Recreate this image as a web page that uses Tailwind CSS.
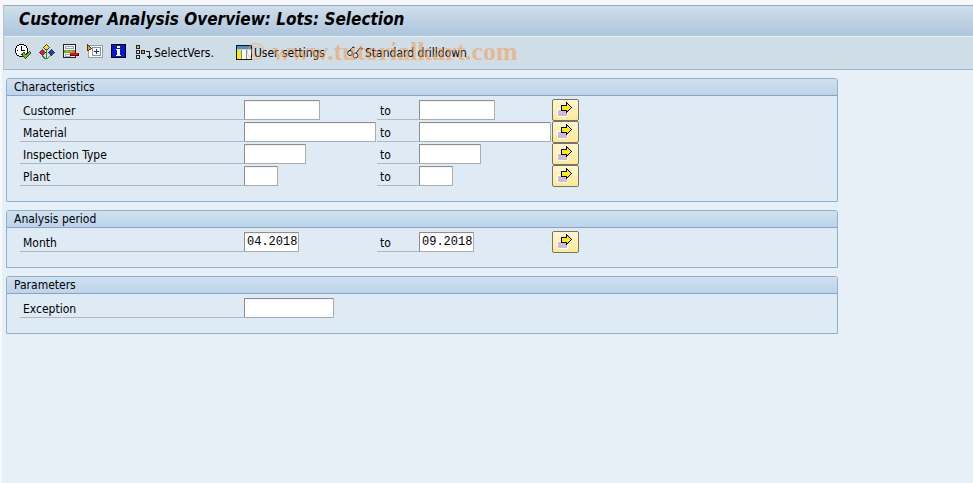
<!DOCTYPE html>
<html lang="en">
<head>
    <meta charset="UTF-8">
    <meta name="viewport" content="width=device-width, initial-scale=1.0">
    <title>Customer Analysis Overview: Lots: Selection</title>
    <script src="https://cdn.jsdelivr.net/npm/@tailwindcss/browser@4"></script>
</head>
<body class="min-h-screen flex flex-col bg-[#f6f8fb] pt-[5px] pl-[2px] font-['DejaVu_Sans_Condensed','DejaVu_Sans',sans-serif] text-[12px] leading-4 text-black">

    <!-- Shared icon of the multiple selection buttons -->
    <svg class="hidden">
        <symbol id="arrow" viewBox="0 0 16 16">
            <path d="M0 7h11v8H0z" fill="#fff"/>
            <path d="M1 8h9v6H1z" fill="#d0badc"/>
            <path d="M9 0h1v1h1v1h1v1h1v1h1v1h1v1h-1v1h-1v1h-1v1h-1v1h-1v1H9V9H4V3h5z" fill="#000"/>
            <path d="M5 4h5V2h1v1h1v1h1v1h1v1h-1v1h-1v1h-1v1h-1V8H5z" fill="#ffe900"/>
        </symbol>
    </svg>

    <!-- Title bar -->
    <header class="ml-px h-8 flex items-center pl-[15px] border-t border-l border-t-[#9aabc0] border-l-[#b4c4d4] border-b border-b-[#e6eef5] bg-linear-to-b from-[#cfdeeb] to-[#adc5dc]">
        <h1 class="text-[17px] leading-5 pb-1 font-bold italic">Customer Analysis Overview: Lots: Selection</h1>
    </header>

    <!-- Toolbar -->
    <nav class="relative ml-px h-[33px] flex items-center pl-[11px] border-l border-b border-l-[#b4c4d4] border-b-[#a4b6c8] bg-[#cfdde7]" aria-label="Toolbar">
        <div class="flex gap-2 pb-0.5">
            <button type="button" aria-label="Execute">
                <svg class="size-4" viewBox="0 0 16 16" shape-rendering="crispEdges">
                    <path d="M4 0h5v1h2v1h1v2h1v5h-1v2h-1v1H9v1H4v-1H2v-1H1V9H0V4h1V2h1V1h2z" fill="#000"/>
                    <path d="M4 1h5v1h2v2h1v5h-1v2H9v1H4v-1H2V9H1V4h1V2h2z" fill="#fff"/>
                    <path d="M6 2h1v4h3v1H6zM2 6h1v1H2zM6 10h1v1H6z" fill="#000"/>
                    <path d="M8 8h2v2h2V9h1V8h1V7h1v1h1v2h-1v1h-1v1h-1v1h-1v1h-1v1h-1v-1H9v-1H8v-1H7V9h1z" fill="#26500e"/>
                    <path d="M8 9h1v1h1v1h2v-1h1V9h1V8h1v2h-1v1h-1v1h-1v1h-1v1h-1v-1H9v-1H8z" fill="#78b63f"/>
                </svg>
            </button>
            <button type="button" aria-label="Variants">
                <svg class="size-4" viewBox="0 0 16 16" shape-rendering="crispEdges">
                    <path d="M7 6h1v9H7zM3 10h1v2h1v1h1v1h3v-1h1v-1h1v-2h1v2h-1v1h-1v1H9v1H5v-1H4v-1H3z" fill="#248a35"/>
                    <path d="M7 0h1v1h1v1h1v1h1v1h-1v1H9v1H6V5H5V4H4V3h1V2h1V1h1z" fill="#444"/>
                    <path d="M7 1h1v1h1v1h1v1H9v1H6V4H5V3h1V2h1z" fill="#ffe600"/>
                    <path d="M3 5h1v1h1v1h1v1h1v1H6v1H5v1H4v1H3v-1H2v-1H1V9H0V8h1V7h1V6h1z" fill="#444"/>
                    <path d="M3 6h1v1h1v1h1v1H5v1H4v1H3v-1H2V9H1V8h1V7h1z" fill="#f01818"/>
                    <path d="M12 5h1v1h1v1h1v1h1v1h-1v1h-1v1h-1v1h-1v-1h-1v-1h-1V9H9V8h1V7h1V6h1z" fill="#333"/>
                    <path d="M12 6h1v1h1v1h1v1h-1v1h-1v1h-1v-1h-1V9h-1V8h1V7h1z" fill="#1c37e8"/>
                </svg>
            </button>
            <button type="button" aria-label="Delete selection row">
                <svg class="size-4" viewBox="0 0 16 16" shape-rendering="crispEdges">
                    <path d="M0 0h13v14H0z" fill="#222"/>
                    <path d="M1 1h11v12H1z" fill="#f3f5fa"/>
                    <path d="M2 2h9v3H2zM2 10h6v3H2z" fill="#98a3bd"/>
                    <path d="M3 3h7v1H3zM3 11h4v1H3z" fill="#fff"/>
                    <path d="M1 6h11v3H1z" fill="#7d9d24"/>
                    <path d="M3 7h2v1H3zM7 7h2v1H7z" fill="#b8c96b"/>
                    <path d="M7 9h9v3H7z" fill="#5c0000"/>
                    <path d="M7 9h8v2H7z" fill="#f00"/>
                </svg>
            </button>
            <button type="button" aria-label="Dynamic selections">
                <svg class="size-4" viewBox="0 0 16 16" shape-rendering="crispEdges">
                    <path d="M1 1h15v13H1z" fill="#9c9c9c"/>
                    <path d="M2 2h13v11H2z" fill="#fff"/>
                    <path d="M5 3h9v9H5z" fill="#7c92c4"/>
                    <path d="M6 4h7v7H6z" fill="#fff"/>
                    <path d="M9 5h1v2h2v1h-2v2H9V8H7V7h2z" fill="#16309c"/>
                    <path d="M0 0h1v1h1v1h1v1h1v1h1v1H4v1H2v1H0z" fill="#58330b"/>
                    <path d="M1 2h1v1h1v1h1v1H2v1H1z" fill="#ef9c1b"/>
                </svg>
            </button>
            <button type="button" aria-label="Information">
                <svg class="size-4" viewBox="0 0 16 16" shape-rendering="crispEdges">
                    <path d="M0 0h15v14H0z" fill="#000"/>
                    <path d="M1 1h13v12H1z" fill="#0018d8"/>
                    <path d="M6 2h3v2H6zM5 5h4v6h1v1H5v-1h1V6H5z" fill="#fff"/>
                </svg>
            </button>
        </div>

        <button type="button" class="ml-[9px] flex items-center gap-0.5 whitespace-nowrap">
            <svg class="size-4" viewBox="0 0 16 16" shape-rendering="crispEdges">
                <path d="M0 0h4v4H0zM0 5h4v4H0zM0 10h4v4H0zM5 5h4v4H5z" fill="#222"/>
                <path d="M1 1h2v2H1z" fill="#b3d465"/>
                <path d="M1 6h2v2H1zM1 11h2v2H1z" fill="#d9e2e6"/>
                <path d="M6 6h2v2H6z" fill="#f2a01e"/>
                <path d="M10 6h4v5h2v1h-1v1h-1v1h-1v-1h-1v-1h-1v-1h2V7h-3z" fill="#222"/>
            </svg>
            SelectVers.
        </button>
        <button type="button" class="ml-[22px] flex items-center gap-0.5 whitespace-nowrap">
            <svg class="size-4" viewBox="0 0 16 16" shape-rendering="crispEdges">
                <path d="M0 0h16v15H0z" fill="#111"/>
                <path d="M1 1h14v3H1z" fill="#3f8fc8"/>
                <path d="M1 5h4v9H1z" fill="#ffe800"/>
                <path d="M6 5h4v9H6zM11 5h4v9h-4z" fill="#f4fafc"/>
                <path d="M5 2h1v12H5zM10 2h1v12h-1z" fill="#7a8d99"/>
                <path d="M1 4h14v1H1z" fill="#b9d9ee"/>
            </svg>
            User settings
        </button>
        <button type="button" class="ml-[22px] flex items-center gap-0.5 whitespace-nowrap">
            <svg class="size-4" viewBox="0 0 16 16" fill="none" stroke="#222">
                <path d="M1 7L6 2h1v1M9 8l4-5h2v2"/>
                <circle cx="3" cy="8" r="2.500"/>
                <circle cx="8.500" cy="10.500" r="2.500"/>
            </svg>
            Standard drilldown
        </button>

        <span class="absolute left-[242px] top-0 font-['Liberation_Serif',serif] text-[26px] leading-[30px] font-bold whitespace-nowrap text-[#f79a45]/55 pointer-events-none"><span class="font-normal">©</span> www.tutorialkart.com</span>
    </nav>

    <!-- Selection screen -->
    <main class="grow bg-[#e8f0f7] pt-2 pl-1">
        <form class="max-w-[832px] flex flex-col gap-2">
            <section class="h-[124px] border border-[#8fafcd] rounded-t-[3px] bg-[#deebf4]" aria-labelledby="characteristics">
                <h2 id="characteristics" class="h-[17px] pl-[7px] border-b border-[#8aa5c4] rounded-t-[2px] bg-linear-to-b from-[#d0e0f0] to-[#bcd4ea]">Characteristics</h2>
                <div class="pt-[3px] pl-[13px]">
                    <div class="h-[22px] grid grid-cols-[224px_133px_42px_133px_27px] items-center">
                        <label for="customer" class="h-5 pt-[3px] pl-[3px] border-b border-[#b0b8bf]">Customer</label>
                        <input id="customer" type="text" class="w-[76px] h-5 rounded-[1px] border border-t-[#8e8e92] border-l-[#8e8e92] border-r-[#a9adb1] border-b-[#a9adb1] bg-white pl-0.5 inset-shadow-xs">
                        <label for="customer-to" class="h-5 pt-[3px] pl-[3px] border-b border-[#b0b8bf]">to</label>
                        <input id="customer-to" type="text" class="w-[76px] h-5 rounded-[1px] border border-t-[#8e8e92] border-l-[#8e8e92] border-r-[#a9adb1] border-b-[#a9adb1] bg-white pl-0.5 inset-shadow-xs">
                        <button type="button" aria-label="Multiple selection for customer" class="h-[22px] pl-1 rounded-[2px] border border-[#77736a] bg-linear-to-b from-[#fff7d0] to-[#ffe98f]">
                            <svg class="size-4" shape-rendering="crispEdges"><use href="#arrow"/></svg>
                        </button>
                    </div>
                    <div class="h-[22px] grid grid-cols-[224px_133px_42px_133px_27px] items-center">
                        <label for="material" class="h-5 pt-[3px] pl-[3px] border-b border-[#b0b8bf]">Material</label>
                        <input id="material" type="text" class="w-[132px] h-5 rounded-[1px] border border-t-[#8e8e92] border-l-[#8e8e92] border-r-[#a9adb1] border-b-[#a9adb1] bg-white pl-0.5 inset-shadow-xs">
                        <label for="material-to" class="h-5 pt-[3px] pl-[3px] border-b border-[#b0b8bf]">to</label>
                        <input id="material-to" type="text" class="w-[132px] h-5 rounded-[1px] border border-t-[#8e8e92] border-l-[#8e8e92] border-r-[#a9adb1] border-b-[#a9adb1] bg-white pl-0.5 inset-shadow-xs">
                        <button type="button" aria-label="Multiple selection for material" class="h-[22px] pl-1 rounded-[2px] border border-[#77736a] bg-linear-to-b from-[#fff7d0] to-[#ffe98f]">
                            <svg class="size-4" shape-rendering="crispEdges"><use href="#arrow"/></svg>
                        </button>
                    </div>
                    <div class="h-[22px] grid grid-cols-[224px_133px_42px_133px_27px] items-center">
                        <label for="inspection" class="h-5 pt-[3px] pl-[3px] border-b border-[#b0b8bf]">Inspection Type</label>
                        <input id="inspection" type="text" class="w-[62px] h-5 rounded-[1px] border border-t-[#8e8e92] border-l-[#8e8e92] border-r-[#a9adb1] border-b-[#a9adb1] bg-white pl-0.5 inset-shadow-xs">
                        <label for="inspection-to" class="h-5 pt-[3px] pl-[3px] border-b border-[#b0b8bf]">to</label>
                        <input id="inspection-to" type="text" class="w-[62px] h-5 rounded-[1px] border border-t-[#8e8e92] border-l-[#8e8e92] border-r-[#a9adb1] border-b-[#a9adb1] bg-white pl-0.5 inset-shadow-xs">
                        <button type="button" aria-label="Multiple selection for inspection type" class="h-[22px] pl-1 rounded-[2px] border border-[#77736a] bg-linear-to-b from-[#fff7d0] to-[#ffe98f]">
                            <svg class="size-4" shape-rendering="crispEdges"><use href="#arrow"/></svg>
                        </button>
                    </div>
                    <div class="h-[22px] grid grid-cols-[224px_133px_42px_133px_27px] items-center">
                        <label for="plant" class="h-5 pt-[3px] pl-[3px] border-b border-[#b0b8bf]">Plant</label>
                        <input id="plant" type="text" class="w-[34px] h-5 rounded-[1px] border border-t-[#8e8e92] border-l-[#8e8e92] border-r-[#a9adb1] border-b-[#a9adb1] bg-white pl-0.5 inset-shadow-xs">
                        <label for="plant-to" class="h-5 pt-[3px] pl-[3px] border-b border-[#b0b8bf]">to</label>
                        <input id="plant-to" type="text" class="w-[34px] h-5 rounded-[1px] border border-t-[#8e8e92] border-l-[#8e8e92] border-r-[#a9adb1] border-b-[#a9adb1] bg-white pl-0.5 inset-shadow-xs">
                        <button type="button" aria-label="Multiple selection for plant" class="h-[22px] pl-1 rounded-[2px] border border-[#77736a] bg-linear-to-b from-[#fff7d0] to-[#ffe98f]">
                            <svg class="size-4" shape-rendering="crispEdges"><use href="#arrow"/></svg>
                        </button>
                    </div>
                </div>
            </section>

            <section class="h-[58px] border border-[#8fafcd] rounded-t-[3px] bg-[#deebf4]" aria-labelledby="period">
                <h2 id="period" class="h-[17px] pl-[7px] border-b border-[#8aa5c4] rounded-t-[2px] bg-linear-to-b from-[#d0e0f0] to-[#bcd4ea]">Analysis period</h2>
                <div class="pt-[3px] pl-[13px]">
                    <div class="h-[22px] grid grid-cols-[224px_133px_42px_133px_27px] items-center">
                        <label for="month" class="h-5 pt-[3px] pl-[3px] border-b border-[#b0b8bf]">Month</label>
                        <input id="month" type="text" value="04.2018" class="w-[55px] h-5 rounded-[1px] border border-t-[#8e8e92] border-l-[#8e8e92] border-r-[#a9adb1] border-b-[#a9adb1] bg-white pl-0.5 inset-shadow-xs font-['Liberation_Mono',monospace]">
                        <label for="month-to" class="h-5 pt-[3px] pl-[3px] border-b border-[#b0b8bf]">to</label>
                        <input id="month-to" type="text" value="09.2018" class="w-[55px] h-5 rounded-[1px] border border-t-[#8e8e92] border-l-[#8e8e92] border-r-[#a9adb1] border-b-[#a9adb1] bg-white pl-0.5 inset-shadow-xs font-['Liberation_Mono',monospace]">
                        <button type="button" aria-label="Multiple selection for month" class="h-[22px] pl-1 rounded-[2px] border border-[#77736a] bg-linear-to-b from-[#fff7d0] to-[#ffe98f]">
                            <svg class="size-4" shape-rendering="crispEdges"><use href="#arrow"/></svg>
                        </button>
                    </div>
                </div>
            </section>

            <section class="h-[58px] border border-[#8fafcd] rounded-t-[3px] bg-[#deebf4]" aria-labelledby="parameters">
                <h2 id="parameters" class="h-[17px] pl-[7px] border-b border-[#8aa5c4] rounded-t-[2px] bg-linear-to-b from-[#d0e0f0] to-[#bcd4ea]">Parameters</h2>
                <div class="pt-[3px] pl-[13px]">
                    <div class="h-[22px] grid grid-cols-[224px_133px] items-center">
                        <label for="exception" class="h-5 pt-[3px] pl-[3px] border-b border-[#b0b8bf]">Exception</label>
                        <input id="exception" type="text" class="w-[90px] h-5 rounded-[1px] border border-t-[#8e8e92] border-l-[#8e8e92] border-r-[#a9adb1] border-b-[#a9adb1] bg-white pl-0.5 inset-shadow-xs">
                    </div>
                </div>
            </section>
        </form>
    </main>

</body>
</html>
